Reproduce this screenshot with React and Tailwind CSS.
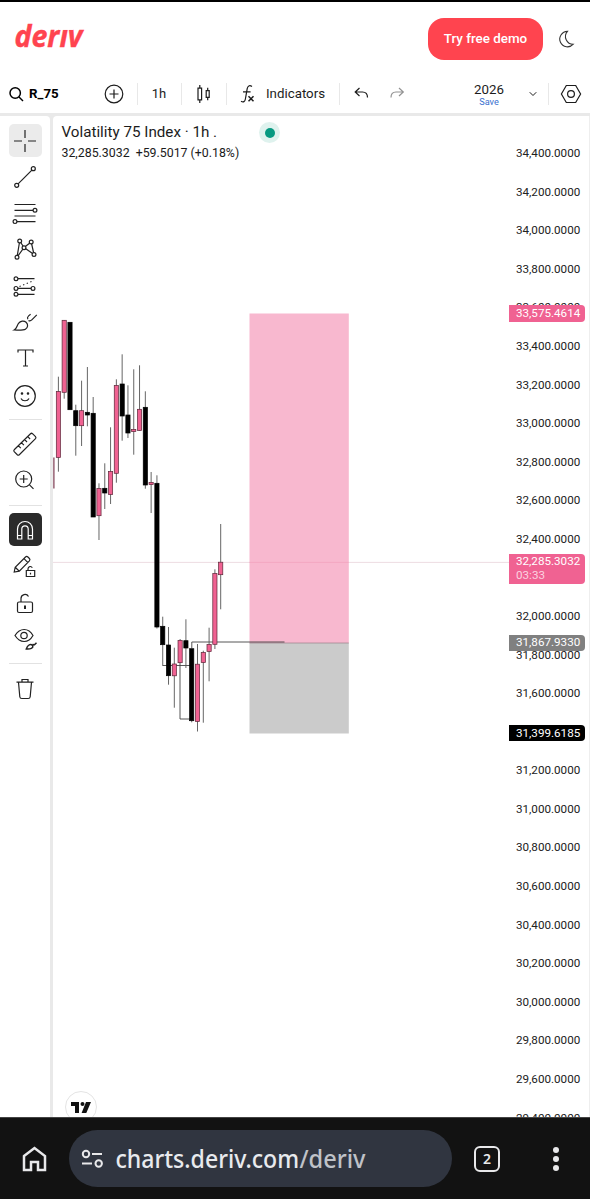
import { ChevronDown } from "lucide-react";

const PRICES = Array.from({ length: 26 }, (_, i) => {
  const value = 34400 - i * 200;
  return { label: `${value.toLocaleString("en-US")}.0000`, hidden: value === 32200 || value === 31400 };
});

// [high, top, bottom, low, up]
const CANDLES = [
  [376.7, 391.5, 457.5, 471.7, 1],
  [320, 320.3, 392.3, 398.7, 1],
  [322.3, 322.3, 409.7, 409.7, 0],
  [404.7, 410.7, 425.7, 455.7, 0],
  [380.7, 410.7, 425.7, 446, 1],
  [367, 412.3, 415, 426.3, 0],
  [397, 413.3, 517, 517, 0],
  [483.3, 488.5, 515.7, 540, 1],
  [463.3, 488.3, 493, 509, 0],
  [427.3, 471.5, 494.5, 504, 1],
  [379.3, 385.5, 473.3, 482.7, 1],
  [354.3, 384, 416, 440.7, 0],
  [385.3, 415, 433, 438, 0],
  [369.3, 429.4, 431.6, 454.7, 1],
  [365.3, 409.3, 430.5, 430.7, 1],
  [391.3, 407.3, 485, 488.7, 0],
  [472, 482.4, 484.6, 513, 1],
  [475.3, 483.3, 627, 628.5, 0],
  [616.7, 626.3, 644.7, 665.7, 0],
  [627, 645, 675.7, 684.7, 0],
  [647.7, 664, 675.8, 707.7, 1],
  [639, 640.5, 662.7, 662.7, 1],
  [619.3, 640.7, 648, 668, 0],
  [648.7, 648.7, 720.7, 722.3, 0],
  [644, 664.2, 721.5, 731.5, 1],
  [650.7, 652.5, 662.5, 722.7, 1],
  [627.7, 644.5, 651.5, 681.3, 1],
  [569.3, 573.5, 644.3, 649, 1],
  [524, 562.2, 574.7, 609.3, 1],
];

function Icon({ children, className = "h-7 w-7", box = "0 0 28 28" }) {
  return (
    <svg
      viewBox={box}
      className={`shrink-0 ${className}`}
      fill="none"
      stroke="currentColor"
      strokeWidth="1.2"
    >
      {children}
    </svg>
  );
}

function Header() {
  return (
    <header className="flex h-[73px] items-center bg-white pl-[13px] pr-[13px] pt-px">
      <svg viewBox="0 0 76 32" className="h-8 w-[76px] overflow-visible">
        <text
          x="1.5"
          y="24"
          textLength="68"
          lengthAdjust="spacingAndGlyphs"
          fill="#ff444f"
          stroke="#ff444f"
          strokeWidth="0.4"
          fontSize="30"
          fontWeight="700"
          fontStyle="italic"
          fontFamily="'Open Sans', 'Noto Sans', sans-serif"
        >
          deriv
        </text>
        <path d="M46-2h14v8.800H46z" fill="#fff" />
      </svg>
      <button className="ml-auto flex h-[42px] w-[115px] items-center justify-center rounded-2xl bg-[#ff444f] text-[13.400px] font-medium text-white">
        Try free demo
      </button>
      <Icon className="ml-[15px] mr-[1px] h-[18px] w-[18px] text-[#333]" box="0 0 20 20">
        <path d="M10.500 1.500A8.600 8.600 0 1 0 17 15.800A8.600 8.600 0 0 1 10.500 1.500Z" />
      </Icon>
    </header>
  );
}

function Divider() {
  return <span className="h-[22px] w-px shrink-0 bg-[#e8e8e8]" />;
}

function Toolbar() {
  return (
    <div className="flex h-[38px] items-center bg-white text-[#1c1c1c]">
      <Icon className="ml-2 h-4 w-4 text-black" box="0 0 16 16">
        <g strokeWidth="1.5">
          <circle cx="7.2" cy="7" r="5.2" />
          <path d="m11 11 4 4" />
        </g>
      </Icon>
      <span className="ml-[5px] w-[75px] text-[13.3px] font-bold text-black">R_75</span>
      <Icon className="h-5 w-5" box="0 0 20 20">
        <circle cx="10" cy="10" r="8.8" />
        <path d="M10 5.5v9M5.5 10h9" />
      </Icon>
      <span className="w-[13px]" />
      <Divider />
      <span className="w-[42px] text-center text-[13px]">1h</span>
      <span className="w-px" />
      <Divider />
      <span className="flex w-[44px] justify-center">
        <Icon className="h-5 w-5" box="0 0 20 20">
          <path d="M4 4.2h3.6v11.6H4zM5.8 1v3.2M5.8 15.8V19M12.2 6.6h3v6.8h-3zM13.7 3.8v2.8M13.7 13.4v2.8" />
        </Icon>
      </span>
      <Divider />
      <Icon className="ml-3 h-5 w-5" box="0 0 20 20">
        <path d="M13 2.5C10.4.8 8.7 2 8.2 4.6L6.4 15c-.5 2.6-2 3.6-4.4 2.2M4 7.8h7.6" />
        <path d="m9.5 12.2 5 5m0-5-5 5" strokeWidth="1.5" />
      </Icon>
      <span className="ml-[7px] text-[13.3px]">Indicators</span>
      <span className="w-[14px]" />
      <Divider />
      <Icon className="ml-[13px] h-5 w-5" box="0 0 20 20">
        <path d="M6.5 4 2.2 8l4.3 4M2.2 8h7.3c3.2 0 5 1.600 5 5.400" />
      </Icon>
      <Icon className="ml-4 h-5 w-5 text-[#929292]" box="0 0 20 20">
        <path d="m10 4 4.3 4-4.3 4M14.3 8H7c-3.200 0-5 1.600-5 5.400" />
      </Icon>
      <div className="ml-auto mr-[21px] flex w-[34px] flex-col items-center">
        <span className="text-[13.3px] leading-[14px]">2026</span>
        <span className="text-[9.2px] leading-[9px] text-[#3a70cf]">Save</span>
      </div>
      <ChevronDown className="mr-[9px] h-3 w-3" strokeWidth={2} />
      <Divider />
      <Icon className="ml-[11px] mr-2 h-[22px] w-[22px]" box="0 0 22 22">
        <path d="M6.300 2.500h9.400l4.900 8.500-4.900 8.500H6.300L1.400 11z" />
        <circle cx="11" cy="11" r="3.400" />
      </Icon>
    </div>
  );
}

function Tool({ children, className = "mt-[3.500px]" }) {
  return (
    <div className={`flex h-[33px] w-[33px] items-center justify-center rounded-[5px] ${className}`}>
      <Icon>{children}</Icon>
    </div>
  );
}

function Sidebar() {
  return (
    <aside className="flex w-[50px] shrink-0 flex-col items-center rounded-tr bg-white pt-[8px] text-[#222]">
      <Tool className="bg-[#ebebeb]">
        <path d="M14 3v8M14 17v8M3 14h8M17 14h8" />
      </Tool>
      <Tool className="mt-[3px]">
        <circle cx="5.700" cy="22.300" r="2" />
        <circle cx="22.300" cy="5.700" r="2" />
        <path d="M7.100 20.900 20.900 7.100" />
      </Tool>
      <Tool className="mt-[3.500px]">
        <path d="M3.500 5.500h21M3.500 11.300h19M3.500 17h21M5.700 22.600h18.800" />
        <circle cx="24" cy="11.300" r="1.900" fill="#fff" />
        <circle cx="4" cy="22.600" r="1.900" fill="#fff" />
      </Tool>
      <Tool className="mt-[2.500px]">
        <path d="M6 22.300 8.700 6M8.700 6l4.300 6.500L6 22.300M13 12.500 20.200 7M20.200 7 23 19.500M13 12.500l10 7" />
        <g fill="#fff">
          <circle cx="6" cy="22.300" r="1.900" />
          <circle cx="8.700" cy="6" r="1.900" />
          <circle cx="13" cy="12.700" r="1.900" />
          <circle cx="20.200" cy="7" r="1.900" />
          <circle cx="23" cy="19.500" r="1.900" />
        </g>
      </Tool>
      <Tool className="mt-1">
        <path d="M7 6.700h16.500M7 16.400h13M7 22.300h16.500" />
        <path d="M8.500 14.500 23 8.500" strokeDasharray="1.300 2.600" />
        <circle cx="5" cy="6.700" r="1.900" />
        <circle cx="5" cy="16.400" r="1.900" />
        <circle cx="22" cy="16.400" r="1.900" />
        <circle cx="5" cy="22.300" r="1.900" />
      </Tool>
      <Tool className="mt-[3px]">
        <path d="M3.200 22c3-1.800 2.600-4.400 4.300-6.600 2-2.600 5.300-3.200 7.600-1.100 2.300 2.200 1.900 5.300-.7 6.900-2 1.200-7 .8-11.200.8ZM17.500 12.400c1.200.8 2.400.4 3.300-.5l5-5M16.800 11.300c-.7-1.400-.2-2.500.8-3.400l2-1.600" />
      </Tool>
      <Tool className="mt-[3.500px]">
        <path d="M7 8.500V6h15v2.500M14.500 6v16M12 22h5" />
      </Tool>
      <Tool className="mt-[4.500px]">
        <circle cx="14" cy="14" r="10.300" />
        <path d="M10 16.500c1.400 3 6.600 3 8 0" />
        <circle cx="11" cy="11.500" r=".7" fill="currentColor" />
        <circle cx="17" cy="11.500" r=".7" fill="currentColor" />
      </Tool>
      <span className="mt-[7px] h-px w-[33px] bg-[#e2e2e2]" />
      <Tool className="mt-[7.500px]">
        <path d="M3.200 19.800 19.500 3.700q1-.9 2 0l3 3q.9 1 0 2L8.300 24.700q-1 .9-2 0l-3.100-3q-.9-1 0-1.900ZM7.500 15.900l2.300 2.300M10.600 12.800l2.300 2.300M13.700 9.700l2.300 2.300M16.800 6.700 19.100 9" />
      </Tool>
      <Tool className="mt-[3px]">
        <circle cx="12.700" cy="13" r="8" />
        <path d="m18.500 18.800 4 4M12.700 9v8M8.700 13h8" />
      </Tool>
      <span className="mt-2 h-px w-[33px] bg-[#e2e2e2]" />
      <Tool className="mt-[7.500px] bg-[#2b2b2b] text-white">
        <path d="M6.500 23V13a7.500 7.500 0 0 1 15 0v10h-4.300V13a3.200 3.200 0 0 0-6.400 0v10ZM6.500 19.500h4.300M17.200 19.500h4.300" />
      </Tool>
      <Tool className="mt-1">
        <path d="m3.200 19 1-4.800L14.500 4q1.200-1.100 2.400 0l1.500 1.500q1.100 1.200 0 2.400L8.300 18.200Zm1-4.800 4.100 4M13 5.600l3.900 4M15.300 17.500h8.400v6h-8.400zM17 17.500v-1.800a2.300 2.300 0 0 1 4.300-1M19.500 19.800v1.600" />
      </Tool>
      <Tool className="mt-1">
        <rect x="6.500" y="12" width="15" height="10.500" rx="1.500" />
        <path d="M10 12V8.500a4 4 0 0 1 7.500-2" />
        <path d="M14 15.500v3.500" strokeWidth="2" />
      </Tool>
      <Tool className="mt-[1.500px]">
        <path d="M4 11.500C9 3.500 17.500 3.500 22 11.500 17.500 19.500 9 19.500 4 11.500Z" />
        <circle cx="13" cy="11.500" r="3.200" />
        <path d="M15.300 25c1.300-4.400 4.400-5.500 6.500-3.200.5 2.200-2.200 3.600-6.500 3.200ZM21.500 20.500l2 .3 2-2" strokeWidth="1.500" />
      </Tool>
      <span className="mt-[8.500px] h-px w-[33px] bg-[#e2e2e2]" />
      <Tool className="mt-2">
        <path d="M5.500 7.200h17M7.500 7.200 8.800 21.700q.2 1.800 2 1.800h6.400q1.800 0 2-1.800l1.300-14.500M11 7.200V4.500h6v2.700" />
      </Tool>
    </aside>
  );
}

// Drawn in page pixels, the viewBox starts at the pane's corner
function Chart() {
  return (
    <svg viewBox="53 116 456 1001" width="456" height="1001" className="absolute left-0 top-0">
      <path d="M53 562.400h456" stroke="#e9d3da" strokeWidth=".8" />
      <path d="M249.500 313.500h99.300V643h-99.300z" fill="#f8b8cf" />
      <path d="M249.500 643h99.300v90.500h-99.300z" fill="#cbcbcb" />
      <path d="M249.500 562.400h99.300" stroke="#f3a3bf" strokeWidth=".8" />
      <path d="M249.500 643h99.300" stroke="#9a8088" strokeWidth=".7" />
      <path
        d="M162.600 665.500H191M180 662v57h12M191.800 648v-6h92.700"
        fill="none"
        stroke="#444"
        strokeWidth=".9"
      />
      <path d="M53.900 457.500v31" stroke="#7d3a50" strokeWidth="1.200" />
      {CANDLES.map(([high, top, bottom, low, up], i) => {
        const x = 58.4 + i * 5.796;
        return (
          <g key={i}>
            <path d={`M${x} ${high}V${low}`} stroke="#555" strokeWidth=".9" />
            <rect
              x={x - 2.1}
              y={top}
              width="4.2"
              height={bottom - top}
              fill={up ? "#f06292" : "#000"}
              stroke={up ? "#5c2638" : "#000"}
              strokeWidth=".7"
            />
          </g>
        );
      })}
    </svg>
  );
}

function PriceTag({ className, children }) {
  return (
    <div className={`absolute left-0 w-[76px] rounded-r-sm pl-[7px] text-white ${className}`}>
      {children}
    </div>
  );
}

function PriceScale() {
  return (
    <div className="absolute bottom-0 right-[4px] top-0 w-[76px] overflow-hidden text-[11.65px] text-[#222]">
      <div className="pl-[7px] pt-[18.500px]">
        {PRICES.map((price) => (
          <div key={price.label} className="flex h-[38.580px] items-center">
            {!price.hidden && price.label}
          </div>
        ))}
      </div>
      <PriceTag className="top-[189px] h-[17px] bg-[#f06292] leading-[16px]">33,575.4614</PriceTag>
      <PriceTag className="top-[438px] h-[30px] bg-[#f06292] pt-px leading-[13.500px]">
        32,285.3032
        <div className="text-[#fbd3e0]">03:33</div>
      </PriceTag>
      <PriceTag className="top-[519px] h-[16px] bg-[#808080] leading-[15px]">31,867.9330</PriceTag>
      <PriceTag className="top-[609px] h-[16px] bg-black leading-[16px]">31,399.6185</PriceTag>
    </div>
  );
}

function ChartPane() {
  return (
    <main className="relative flex-1 overflow-hidden rounded-tl border-r border-[#eee] bg-white">
      <Chart />
      <div className="relative pl-[8.500px] pt-[7.500px] text-[#1b1b1b]">
        <div className="flex h-[18px] items-center text-[15.200px]">
          <span className="w-[197.500px] whitespace-nowrap">Volatility 75 Index · 1h .</span>
          <span className="flex h-[21px] w-[21px] items-center justify-center rounded-full bg-[#dff2ee]">
            <span className="h-2.5 w-2.5 rounded-full bg-[#089981]" />
          </span>
        </div>
        <div className="mt-[2.500px] flex gap-[6px] text-[12.350px] leading-[18px]">
          <span>32,285.3032</span>
          <span>+59.5017 (+0.18%)</span>
        </div>
      </div>
      <PriceScale />
      <div className="absolute -bottom-[6px] left-[12px] flex h-8 w-8 items-center justify-center rounded-full border border-[#e4e4e4] bg-white">
        <svg viewBox="0 0 20 11" className="h-[11px] w-5" fill="#111">
          <path d="M0 0h8v11H4V4H0zM15 0h5l-4.700 11h-4.700z" />
          <circle cx="11.500" cy="2" r="2" />
        </svg>
      </div>
    </main>
  );
}

function BrowserBar() {
  return (
    <footer className="flex h-[82px] items-center border-t border-[#444] bg-[#121212] text-[#e8e8ea]">
      <Icon className="ml-[22px] h-[26px] w-[25px]" box="0 0 25 26">
        <path d="M2 10 12.500 2 23 10v14h-7v-8H9v8H2z" strokeWidth="2.500" />
      </Icon>
      <div className="ml-[22px] flex h-[57px] w-[383px] items-center rounded-full bg-[#303540] pl-[12px]">
        <Icon className="h-[20px] w-[23px]" box="0 0 23 20">
          <g strokeWidth="2">
            <circle cx="5" cy="5" r="3.200" />
            <path d="M11 5h10M1 14.500h10" />
            <circle cx="17.700" cy="14.500" r="3.200" />
          </g>
        </Icon>
        <svg
          viewBox="0 0 260 40"
          className="ml-[11px] h-10 w-[260px]"
          fontSize="25"
          fontWeight="500"
          fontFamily="'Noto Sans', sans-serif"
        >
          <text x="0.500" y="28.500" textLength="183.500" lengthAdjust="spacingAndGlyphs" fill="#e8eaee">
            charts.deriv.com
          </text>
          <text x="184.500" y="28.500" textLength="66" lengthAdjust="spacingAndGlyphs" fill="#bfc2c8">
            /deriv
          </text>
        </svg>
      </div>
      <div className="ml-[22px] flex h-[26px] w-[26px] items-center justify-center rounded-[6px] border-[2.500px] border-[#e8e8ea] font-['Noto_Sans',sans-serif] text-[14px] font-semibold">
        2
      </div>
      <div className="ml-auto mr-[31px] flex flex-col gap-[3px]">
        <span className="h-[6px] w-[6px] rounded-full bg-[#e8e8ea]" />
        <span className="h-[6px] w-[6px] rounded-full bg-[#e8e8ea]" />
        <span className="h-[6px] w-[6px] rounded-full bg-[#e8e8ea]" />
      </div>
    </footer>
  );
}

export default function App() {
  return (
    <div className="flex h-[1199px] w-[590px] flex-col overflow-hidden bg-[#e9e9e9] font-[Roboto,sans-serif]">
      <div className="h-[2px] shrink-0 bg-black" />
      <Header />
      <Toolbar />
      <div className="mt-[3px] flex min-h-0 flex-1 gap-[3px]">
        <Sidebar />
        <ChartPane />
      </div>
      <BrowserBar />
    </div>
  );
}
